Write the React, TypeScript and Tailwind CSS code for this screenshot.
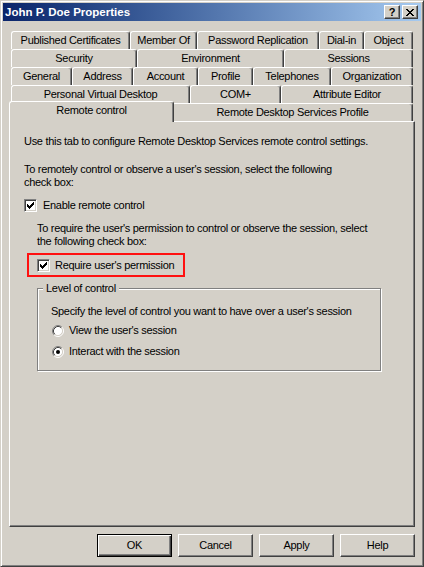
import React from "react";

const tabBase =
  "h-[18px] shrink-0 flex items-center justify-center whitespace-nowrap bg-[#d4d0c8] border-t border-l border-r border-t-white border-l-white border-r-[#404040] shadow-[inset_-1px_0_0_#808080] rounded-t-[3px]";

const btnBase =
  "w-[75px] h-[23px] flex items-center justify-center bg-[#d4d0c8] text-black";

function CheckMark() {
  return (
    <svg width="7" height="7" viewBox="0 0 7 7" shapeRendering="crispEdges">
      <path
        d="M6 0h1v1h-1z M5 1h2v1h-2z M0 2h1v1h-1z M4 2h3v1h-3z M0 3h2v1h-2z M3 3h3v1h-3z M0 4h5v1h-5z M1 5h3v1h-3z M2 6h1v1h-1z"
        fill="#000"
      />
    </svg>
  );
}

function Checkbox({ checked }: { checked?: boolean }) {
  return (
    <span className="w-[13px] h-[13px] shrink-0 flex items-center justify-center bg-white border border-t-[#808080] border-l-[#808080] border-r-white border-b-white shadow-[inset_1px_1px_0_#404040,inset_-1px_-1px_0_#d4d0c8]">
      {checked && <CheckMark />}
    </span>
  );
}

function Radio({ checked }: { checked?: boolean }) {
  return (
    <svg width="12" height="12" viewBox="0 0 12 12" className="shrink-0">
      <circle cx="6" cy="6" r="4.5" fill="#fff" />
      <path d="M2.11 9.89 A5.5 5.5 0 0 1 9.89 2.11" stroke="#808080" strokeWidth="1" fill="none" />
      <path d="M9.89 2.11 A5.5 5.5 0 0 1 2.11 9.89" stroke="#ffffff" strokeWidth="1" fill="none" />
      <path d="M2.82 9.18 A4.5 4.5 0 0 1 9.18 2.82" stroke="#404040" strokeWidth="1" fill="none" />
      <path d="M9.18 2.82 A4.5 4.5 0 0 1 2.82 9.18" stroke="#d4d0c8" strokeWidth="1" fill="none" />
      {checked && <circle cx="6" cy="6" r="2" fill="#000" />}
    </svg>
  );
}

export default function App() {
  return (
    <div
      className="w-[424px] h-[567px] bg-[#d4d0c8] border border-t-[#d4d0c8] border-l-[#d4d0c8] border-r-[#404040] border-b-[#404040] shadow-[inset_1px_1px_0_#ffffff,inset_-1px_-1px_0_#808080] p-[2px] flex flex-col text-[11px] tracking-[-0.3px] leading-[13px] text-black"
      style={{ fontFamily: '"Liberation Sans", Arial, sans-serif' }}
    >
      {/* Title bar */}
      <div className="h-[18px] shrink-0 flex items-center justify-between pl-[2px] pr-[3px] bg-linear-to-r from-[#0a246a] to-[#a6caf0]">
        <span className="text-white font-bold text-[11.5px] tracking-normal">John P. Doe Properties</span>
        <div className="flex gap-[2px]">
          <div className="w-[16px] h-[14px] flex items-center justify-center bg-[#d4d0c8] border border-t-white border-l-white border-r-[#404040] border-b-[#404040] shadow-[inset_-1px_-1px_0_#808080] font-bold text-[11px] leading-none tracking-normal">
            ?
          </div>
          <div className="w-[16px] h-[14px] flex items-center justify-center bg-[#d4d0c8] border border-t-white border-l-white border-r-[#404040] border-b-[#404040] shadow-[inset_-1px_-1px_0_#808080]">
            <svg width="8" height="7" viewBox="0 0 8 7" shapeRendering="crispEdges">
              <path
                d="M0 0h2v1h-2z M6 0h2v1h-2z M1 1h2v1h-2z M5 1h2v1h-2z M2 2h4v1h-4z M3 3h2v1h-2z M2 4h4v1h-4z M1 5h2v1h-2z M5 5h2v1h-2z M0 6h2v1h-2z M6 6h2v1h-2z"
                fill="#000"
              />
            </svg>
          </div>
        </div>
      </div>

      {/* Tab control */}
      <div className="mt-[10px] mx-[6px] flex flex-col">
        <div className="px-[2px] flex flex-col">
          <div className="flex">
            <div className={`${tabBase} w-[119px]`}>Published Certificates</div>
            <div className={`${tabBase} w-[67px]`}>Member Of</div>
            <div className={`${tabBase} w-[122px]`}>Password Replication</div>
            <div className={`${tabBase} w-[45px]`}>Dial-in</div>
            <div className={`${tabBase} w-[49px]`}>Object</div>
          </div>
          <div className="flex">
            <div className={`${tabBase} w-[126px]`}>Security</div>
            <div className={`${tabBase} w-[147px]`}>Environment</div>
            <div className={`${tabBase} w-[129px]`}>Sessions</div>
          </div>
          <div className="flex">
            <div className={`${tabBase} w-[61px]`}>General</div>
            <div className={`${tabBase} w-[61px]`}>Address</div>
            <div className={`${tabBase} w-[65px]`}>Account</div>
            <div className={`${tabBase} w-[55px]`}>Profile</div>
            <div className={`${tabBase} w-[78px]`}>Telephones</div>
            <div className={`${tabBase} w-[82px]`}>Organization</div>
          </div>
          <div className="flex">
            <div className={`${tabBase} w-[179px]`}>Personal Virtual Desktop</div>
            <div className={`${tabBase} w-[91px]`}>COM+</div>
            <div className={`${tabBase} w-[132px]`}>Attribute Editor</div>
          </div>
          <div className="flex h-[18px]">
            <div className="relative z-10 -ml-[2px] -mr-[2px] -mt-[2px] w-[165px] h-[21px] shrink-0 flex justify-center pt-[2px] bg-[#d4d0c8] border-t border-l border-r border-t-white border-l-white border-r-[#404040] shadow-[inset_-1px_0_0_#808080] rounded-t-[3px]">
              Remote control
            </div>
            <div className={`${tabBase} w-[241px]`}>Remote Desktop Services Profile</div>
          </div>
        </div>

        {/* Panel */}
        <div className="h-[406px] bg-[#d4d0c8] border border-t-white border-l-white border-r-[#404040] border-b-[#404040] shadow-[inset_-1px_-1px_0_#808080] pt-[13px] pl-[14px] flex flex-col">
          <p>Use this tab to configure Remote Desktop Services remote control settings.</p>
          <p className="mt-[15px]">
            To remotely control or observe a user's session, select the following
            <br />
            check box:
          </p>
          <div className="mt-[10px] flex items-center gap-[6px] h-[13px]">
            <Checkbox checked />
            <span>Enable remote control</span>
          </div>
          <p className="mt-[10px] ml-[13px]">
            To require the user's permission to control or observe the session, select
            <br />
            the following check box:
          </p>
          <div className="mt-[5px] ml-[3px] w-[158px] h-[24px] border-2 border-[#ff1010] flex items-center pl-[8px] gap-[5px]">
            <Checkbox checked />
            <span>Require user's permission</span>
          </div>
          <fieldset className="mt-[5px] ml-[13px] w-[344px] h-[89px] border border-[#808080] shadow-[inset_1px_1px_0_#ffffff,1px_1px_0_#ffffff] pl-[5px]">
            <legend className="px-[3px] bg-[#d4d0c8]">Level of control</legend>
            <div className="pl-[8px] pt-[10px] flex flex-col">
              <p>Specify the level of control you want to have over a user's session</p>
              <div className="mt-[6px] flex items-center gap-[5px] h-[13px] pl-[1px]">
                <Radio />
                <span>View the user's session</span>
              </div>
              <div className="mt-[8px] flex items-center gap-[5px] h-[13px] pl-[1px]">
                <Radio checked />
                <span>Interact with the session</span>
              </div>
            </div>
          </fieldset>
        </div>
      </div>

      {/* Buttons */}
      <div className="mt-[7px] mr-[6px] flex justify-end gap-[6px]">
        <div className={`${btnBase} border border-black shadow-[inset_1px_1px_0_#ffffff,inset_-1px_-1px_0_#404040,inset_-2px_-2px_0_#808080]`}>
          OK
        </div>
        <div className={`${btnBase} border border-t-white border-l-white border-r-[#404040] border-b-[#404040] shadow-[inset_-1px_-1px_0_#808080]`}>
          Cancel
        </div>
        <div className={`${btnBase} border border-t-white border-l-white border-r-[#404040] border-b-[#404040] shadow-[inset_-1px_-1px_0_#808080]`}>
          Apply
        </div>
        <div className={`${btnBase} border border-t-white border-l-white border-r-[#404040] border-b-[#404040] shadow-[inset_-1px_-1px_0_#808080]`}>
          Help
        </div>
      </div>
    </div>
  );
}
